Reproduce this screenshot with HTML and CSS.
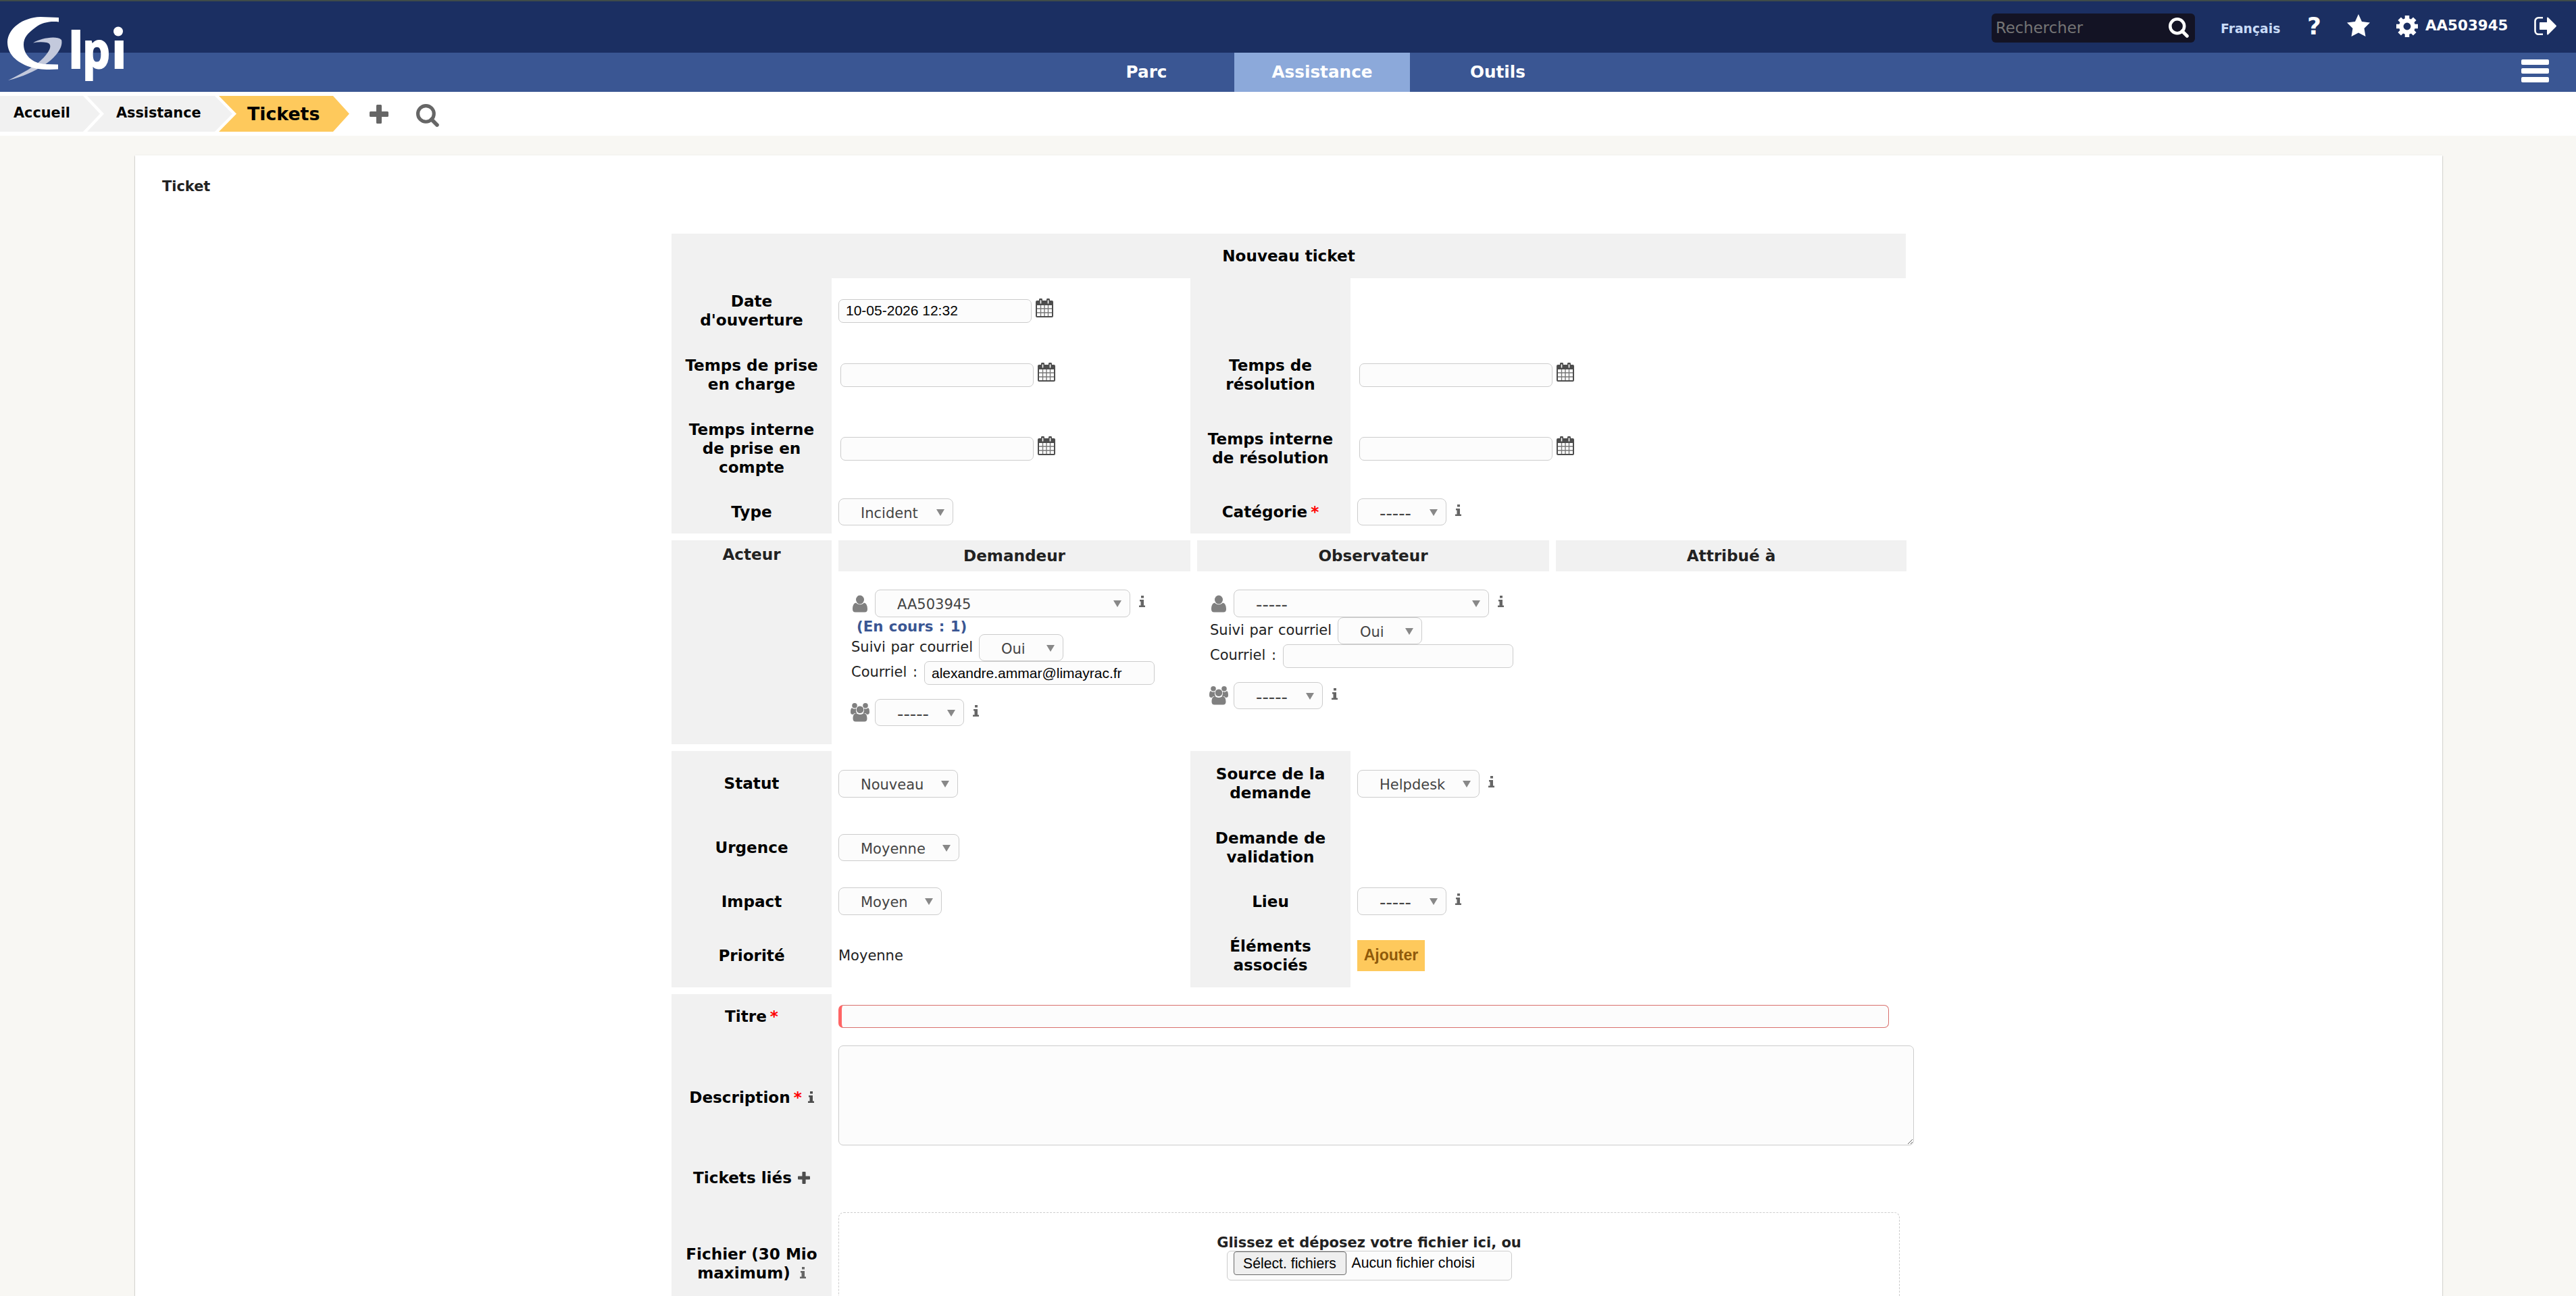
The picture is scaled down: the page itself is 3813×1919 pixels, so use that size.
FILE: index.html
```html
<!DOCTYPE html>
<html lang="fr">
<head>
    <meta charset="UTF-8">
    <meta name="viewport" content="width=device-width, initial-scale=1.0">
    <title>GLPI - Tickets</title>
    <link rel="stylesheet" href="styles.css">
</head>
<body>
    <!-- shared icons -->
    <svg class="sprite" width="0" height="0">
        <symbol id="calendar" viewBox="0 0 26 28">
            <path fill="#4d4d4d" fill-rule="evenodd" d="M2 3h3V2a2.500 2.500 0 0 1 5 0v1h6V2a2.500 2.500 0 0 1 5 0v1h3a2 2 0 0 1 2 2v21a2 2 0 0 1-2 2H2a2 2 0 0 1-2-2V5a2 2 0 0 1 2-2zM2 10v16h22V10z"/>
            <path fill="#fff" d="M6.700 2.500h1.600v5H6.700zM17.700 2.500h1.600v5h-1.600z"/>
            <path stroke="#777" stroke-width="1.400" d="M2 15h22M2 21h22M7.500 10v16M13 10v16M18.500 10v16"/>
        </symbol>
        <symbol id="info" viewBox="0 0 9 17">
            <path d="M3 0h4v3.500H3zM1 6h6v8.500h2V17H0v-2.500h2.500v-6H1z"/>
        </symbol>
        <symbol id="user" viewBox="0 0 28 28">
            <ellipse cx="14" cy="8" rx="6" ry="6.500"/>
            <path d="M8 12.500c3.500 3.500 8.500 3.500 12 0 3.500.8 5 4.500 5 9.500 0 3-1.500 4.500-4 4.500H7c-2.500 0-4-1.500-4-4.500 0-5 1.500-8.700 5-9.500z"/>
        </symbol>
        <symbol id="users" viewBox="0 0 28 28">
            <circle cx="6" cy="3.800" r="3.800"/>
            <circle cx="22" cy="3.800" r="3.800"/>
            <path d="M2 7c2 2 4 2 6 1 0 4 0 5 1.500 7H6c-1 .8-1.500 1.200-2 2-3 0-4-1-4-3.500C0 10 .5 8 2 7zM26 7c-2 2-4 2-6 1 0 4 0 5-1.500 7H22c1 .8 1.500 1.200 2 2 3 0 4-1 4-3.500C28 10 27.500 8 26 7z"/>
            <circle cx="14" cy="9.800" r="5.300"/>
            <path d="M8.500 15c3 2.500 8 2.500 11 0 3.500.5 5 3.500 5 8 0 3-1.500 4.500-4 4.500h-13C5 27.500 3.500 26 3.500 23c0-4.500 1.500-7.500 5-8z"/>
        </symbol>
        <symbol id="search" viewBox="0 0 33 33">
            <circle cx="14" cy="14" r="11.500" fill="none" stroke="currentColor" stroke-width="5"/>
            <path d="M22 22l8 8" stroke="currentColor" stroke-width="5.500" stroke-linecap="round"/>
        </symbol>
        <symbol id="plus" viewBox="0 0 28 28">
            <path d="M11.500 0h5a1.500 1.500 0 0 1 1.500 1.500V10h8.500a1.500 1.500 0 0 1 1.500 1.500v5a1.500 1.500 0 0 1-1.500 1.500H18v8.500a1.500 1.500 0 0 1-1.500 1.500h-5a1.500 1.500 0 0 1-1.500-1.500V18H1.500A1.500 1.500 0 0 1 0 16.500v-5A1.500 1.500 0 0 1 1.500 10H10V1.500A1.500 1.500 0 0 1 11.500 0z"/>
        </symbol>
    </svg>

    <header>
        <svg class="logo" width="200" height="136" viewBox="0 0 200 136">
            <path fill="#c3c9dc" d="M49 63.500C60 57 83 52 91 59c3 12-10 27-25 37-14 9-33 18-54 23 20-10 41-21 53-34 10-11 13-20 4-22-6-1-13-1-20 .5z"/>
            <path fill="#fff" d="M87 26v6.500C75 31 62 33 52 41c-11 8-17 15-17 25 0 14 11 28 33 29l18 .5v7c-16 1-31 .5-42-3.500C24 92 11 80 11 62 12 42 33 26 60 25z"/>
            <g class="logo-text">
                <text x="101" y="101">l</text>
                <text x="122" y="101" textLength="41" lengthAdjust="spacingAndGlyphs">p</text>
                <text x="165" y="101">ı</text>
            </g>
            <circle cx="175" cy="46.500" r="7" fill="#fff"/>
        </svg>
        <div class="top-bar">
            <div class="search-box">
                <span>Rechercher</span>
                <svg width="30" height="30"><use href="#search"/></svg>
            </div>
            <a class="lang">Français</a>
            <a class="help">?</a>
            <svg class="star" width="34" height="33" viewBox="0 0 34 33"><path fill="#fff" d="M17 0l5 11 12 1.500-8.500 8.500 2 12L17 27.500 6.500 33l2-12L0 12.500 12 11z"/></svg>
            <svg class="gear" width="32" height="32" viewBox="0 0 32 32">
                <circle cx="16" cy="16" r="8.700" fill="none" stroke="#fff" stroke-width="6.500"/>
                <path stroke="#fff" stroke-width="6.500" d="M16 0v6M16 26v6M0 16h6M26 16h6M4.700 4.700l4.200 4.200M23.100 23.100l4.200 4.200M4.700 27.300l4.200-4.200M23.100 8.900l4.200-4.200"/>
            </svg>
            <a class="login">AA503945</a>
            <svg class="logout" width="33" height="27" viewBox="0 0 33 27">
                <path fill="none" stroke="#fff" stroke-width="2.600" d="M13 1.300H6.500a5 5 0 0 0-5 5v14.400a5 5 0 0 0 5 5H13"/>
                <path fill="#fff" d="M9 8h10V2c0-1.500 1-2 2-1l11.500 11.500c.6.600.6 1.400 0 2L21 26c-1 1-2 .5-2-1v-6H9c-.8 0-1-.5-1-1V9c0-.6.300-1 1-1z"/>
            </svg>
        </div>
        <nav>
            <a>Parc</a>
            <a class="active">Assistance</a>
            <a>Outils</a>
            <div class="burger"><span></span><span></span><span></span></div>
        </nav>
    </header>

    <div class="breadcrumb">
        <a class="crumb first">Accueil</a>
        <a class="crumb second">Assistance</a>
        <a class="crumb current">Tickets</a>
        <svg class="add" width="28" height="28"><use href="#plus"/></svg>
        <svg class="find" width="34" height="34"><use href="#search"/></svg>
    </div>

    <main>
        <h2>Ticket</h2>
        <form class="ticket-form">
            <div class="title">Nouveau ticket</div>

            <section class="fields dates">
                <label>Date<br>d'ouverture</label>
                <div class="cell">
                    <input class="date" type="text" value="10-05-2026 12:32">
                    <svg class="cal" width="26" height="28"><use href="#calendar"/></svg>
                </div>
                <label></label>
                <div class="cell"></div>

                <label>Temps de prise<br>en charge</label>
                <div class="cell indent">
                    <input class="date" type="text">
                    <svg class="cal" width="26" height="28"><use href="#calendar"/></svg>
                </div>
                <label>Temps de<br>résolution</label>
                <div class="cell indent">
                    <input class="date" type="text">
                    <svg class="cal" width="26" height="28"><use href="#calendar"/></svg>
                </div>

                <label>Temps interne<br>de prise en<br>compte</label>
                <div class="cell indent">
                    <input class="date" type="text">
                    <svg class="cal" width="26" height="28"><use href="#calendar"/></svg>
                </div>
                <label>Temps interne<br>de résolution</label>
                <div class="cell indent">
                    <input class="date" type="text">
                    <svg class="cal" width="26" height="28"><use href="#calendar"/></svg>
                </div>

                <label>Type</label>
                <div class="cell"><div class="select w-incident">Incident</div></div>
                <label><span>Catégorie<span class="red">*</span></span></label>
                <div class="cell">
                    <div class="select empty">-----</div>
                    <svg class="info" width="9" height="17"><use href="#info"/></svg>
                </div>
            </section>

            <section class="actors">
                <div class="actor-label">Acteur</div>
                <div class="actor">
                    <h3>Demandeur</h3>
                    <div class="line">
                        <svg class="who" width="28" height="28"><use href="#user"/></svg>
                        <div class="select wide">AA503945</div>
                        <svg class="info" width="9" height="17"><use href="#info"/></svg>
                    </div>
                    <a class="ongoing">(En cours : 1)</a>
                    <div class="line">
                        <span class="text follow">Suivi par courriel</span>
                        <div class="select yes">Oui</div>
                    </div>
                    <div class="line">
                        <span class="text mail">Courriel :</span>
                        <input class="email" type="text" value="alexandre.ammar@limayrac.fr">
                    </div>
                    <div class="line group">
                        <svg class="who" width="28" height="28"><use href="#users"/></svg>
                        <div class="select empty">-----</div>
                        <svg class="info" width="9" height="17"><use href="#info"/></svg>
                    </div>
                </div>
                <div class="actor">
                    <h3>Observateur</h3>
                    <div class="line">
                        <svg class="who" width="28" height="28"><use href="#user"/></svg>
                        <div class="select empty wide">-----</div>
                        <svg class="info" width="9" height="17"><use href="#info"/></svg>
                    </div>
                    <div class="line">
                        <span class="text follow">Suivi par courriel</span>
                        <div class="select yes">Oui</div>
                    </div>
                    <div class="line">
                        <span class="text mail">Courriel :</span>
                        <input class="email" type="text">
                    </div>
                    <div class="line group">
                        <svg class="who" width="28" height="28"><use href="#users"/></svg>
                        <div class="select empty">-----</div>
                        <svg class="info" width="9" height="17"><use href="#info"/></svg>
                    </div>
                </div>
                <div class="actor">
                    <h3>Attribué à</h3>
                </div>
            </section>

            <section class="fields status">
                <label>Statut</label>
                <div class="cell"><div class="select tall w-nouveau">Nouveau</div></div>
                <label>Source de la<br>demande</label>
                <div class="cell">
                    <div class="select tall w-helpdesk">Helpdesk</div>
                    <svg class="info" width="9" height="17"><use href="#info"/></svg>
                </div>

                <label>Urgence</label>
                <div class="cell"><div class="select w-moyenne">Moyenne</div></div>
                <label>Demande de<br>validation</label>
                <div class="cell"></div>

                <label>Impact</label>
                <div class="cell"><div class="select tall w-moyen">Moyen</div></div>
                <label>Lieu</label>
                <div class="cell">
                    <div class="select tall empty">-----</div>
                    <svg class="info" width="9" height="17"><use href="#info"/></svg>
                </div>

                <label>Priorité</label>
                <div class="cell">Moyenne</div>
                <label>Éléments<br>associés</label>
                <div class="cell"><button type="button" class="submit">Ajouter</button></div>
            </section>

            <section class="fields content">
                <label><span>Titre<span class="red">*</span></span></label>
                <div class="cell"><input class="subject" type="text"></div>

                <label><span>Description<span class="red">*</span><svg class="mini" width="9" height="17"><use href="#info"/></svg></span></label>
                <div class="cell"><textarea></textarea></div>

                <label class="linked"><span>Tickets liés<svg class="mini" width="18" height="18"><use href="#plus"/></svg></span></label>
                <div class="cell"></div>

                <label><span>Fichier (30 Mio<br>maximum)<svg class="mini far" width="9" height="17"><use href="#info"/></svg></span></label>
                <div class="cell">
                    <div class="dropzone">
                        <b>Glissez et déposez votre fichier ici, ou</b>
                        <div class="file">
                            <span class="file-button">Sélect. fichiers</span>
                            <span>Aucun fichier choisi</span>
                        </div>
                    </div>
                </div>
            </section>
        </form>
    </main>
</body>
</html>
```
FILE: styles.css
```css
* {
    box-sizing: border-box;
}

body {
    margin: 0;
    height: 1919px;
    overflow: hidden;
    background: #f8f7f3;
    font-family: Verdana, "DejaVu Sans", sans-serif;
    font-size: 21px;
    color: #222;
}

svg {
    display: block;
    flex: none;
}

.sprite {
    position: absolute;
}

/* Header */
header {
    position: relative;
    border-top: 2px solid #3f4c49;
    color: #fff;
    font-weight: bold;
}

.logo {
    position: absolute;
    left: 0;
    top: -2px;
}

.logo-text {
    fill: #fff;
    stroke: #fff;
    stroke-width: 2px;
    font-family: "Open Sans", sans-serif;
    font-size: 74px;
    font-weight: bold;
}

.top-bar {
    display: flex;
    justify-content: flex-end;
    align-items: center;
    height: 76px;
    padding: 0 29px 3px 0;
    background: #1b2f62;
}

.search-box {
    display: flex;
    justify-content: space-between;
    align-items: center;
    width: 301px;
    height: 43px;
    margin: 5px 38px 0 0;
    padding: 0 9px 0 6px;
    border-radius: 6px;
    background: #131324;
    font-size: 22.8px;
    font-weight: normal;
}

.search-box span {
    color: #757575;
}

.lang {
    width: 89px;
    margin: 7px 39px 0 0;
    font-size: 18.8px;
    color: #c9dcf8;
}

.help {
    width: 21px;
    margin-right: 38px;
    font-size: 36px;
    line-height: 36px;
}

.star {
    margin: 0 39px 2px 0;
}

.gear {
    margin-right: 11px;
}

.login {
    width: 122px;
    margin: 0 39px 2px 0;
    font-size: 21.4px;
}

nav {
    display: flex;
    align-items: center;
    height: 58px;
    padding: 0 40px 0 1567px;
    background: #3a5693;
}

nav a {
    width: 260px;
    font-size: 24.7px;
    line-height: 58px;
    text-align: center;
}

nav .active {
    background: #8ca9da;
}

.burger {
    display: flex;
    flex-direction: column;
    gap: 5px;
    margin: 0 0 4px auto;
}

.burger span {
    width: 41px;
    height: 8px;
    border-radius: 2px;
    background: #fff;
}

/* Breadcrumb */
.breadcrumb {
    display: flex;
    align-items: center;
    height: 65px;
    background: #fff;
    color: #666;
}

.crumb {
    height: 53px;
    background: #f1f1f1;
    color: #000;
    font-size: 20.8px;
    font-weight: bold;
    line-height: 50px;
}

.first {
    width: 148px;
    padding-left: 20px;
    clip-path: polygon(0 0, 123px 0, 148px 50%, 123px 100%, 0 100%);
}

.second {
    width: 215px;
    margin-left: -19px;
    padding-left: 43px;
    clip-path: polygon(0 0, 189px 0, 215px 50%, 189px 100%, 0 100%, 25px 50%);
}

.current {
    width: 193px;
    margin-left: -20px;
    padding-left: 42px;
    background: #fec95c;
    font-size: 26.8px;
    line-height: 54px;
    clip-path: polygon(0 0, 169px 0, 193px 50%, 169px 100%, 0 100%, 26px 50%);
}

.add {
    margin-left: 30px;
    fill: #666;
}

.find {
    margin: 5px 0 0 41px;
}

/* Page */
main {
    width: 3415px;
    height: 1689px;
    margin: 29px 0 0 200px;
    padding: 32px 40px 0;
    overflow: hidden;
    background: #fff;
    box-shadow: 0 1px 2px rgba(0, 0, 0, 0.4);
}

h2 {
    margin: 0;
    font-size: 20.9px;
    line-height: 28px;
}

.ticket-form {
    width: 1827px;
    margin: 56px 0 0 754px;
}

.title {
    height: 66px;
    background: #f1f1f1;
    color: #000;
    font-size: 23.1px;
    font-weight: bold;
    line-height: 67px;
    text-align: center;
}

.fields {
    display: grid;
    grid-template-columns: 237px 531px 237px 822px;
    margin-bottom: 10px;
}

.dates {
    grid-template-rows: 96px 94px 124px 64px;
}

.status {
    grid-template-rows: 96px 94px 65px 95px;
}

.content {
    grid-template-columns: 237px 1590px;
    grid-template-rows: 66px 174px 63px 192px;
}

.fields label {
    display: flex;
    justify-content: center;
    align-items: center;
    background: #f1f1f1;
    color: #000;
    font-size: 23.1px;
    font-weight: bold;
    line-height: 28px;
    text-align: center;
}

.cell {
    display: flex;
    align-items: center;
    padding-left: 10px;
}

.indent {
    padding-left: 13px;
}

.red {
    margin-left: 5px;
    color: #f00;
    font-weight: bold;
}

input, textarea {
    border: 1px solid #ccc;
    border-radius: 7px;
    background: #fcfcfc;
    color: #000;
    font-family: "Liberation Sans", Arial, sans-serif;
    font-size: 21px;
}

.date {
    width: 286px;
    height: 35px;
    padding: 0 10px;
}

.cal {
    margin: 0 0 9px 6px;
}

.select {
    position: relative;
    height: 40px;
    padding: 2px 0 0 32px;
    border: 1px solid #ccc;
    border-radius: 8px;
    background: #fcfcfc;
    color: #444;
    font-size: 21px;
    line-height: 38px;
}

.select::after {
    content: "";
    position: absolute;
    right: 12px;
    top: 15px;
    border: solid transparent;
    border-width: 10px 6px 0;
    border-top-color: #888;
}

.tall {
    height: 41px;
}

.empty {
    width: 132px;
    font-size: 26px;
}

.w-incident {
    width: 170px;
}

.w-nouveau {
    width: 177px;
}

.w-moyenne {
    width: 179px;
}

.w-moyen {
    width: 153px;
}

.w-helpdesk {
    width: 181px;
}

.yes {
    width: 125px;
}

.wide {
    width: 378px;
    height: 41px;
}

.info {
    margin: 0 0 6px 13px;
    fill: #666;
}

.mini {
    display: inline-block;
    margin-left: 9px;
    fill: #4d4d4d;
}

.far {
    margin-left: 14px;
    fill: #666;
}

.linked .mini {
    margin-bottom: -1px;
}

/* Actors */
.actors {
    display: grid;
    grid-template-columns: 237px 521px 521px 519px;
    column-gap: 10px;
    height: 302px;
    margin-bottom: 10px;
}

.actor-label {
    background: #f1f1f1;
    font-size: 23.1px;
    font-weight: bold;
    line-height: 42px;
    text-align: center;
}

.actor h3 {
    height: 46px;
    margin: 0 0 27px;
    background: #f1f1f1;
    font-size: 23.1px;
    line-height: 46px;
    text-align: center;
}

.line {
    display: flex;
    align-items: center;
    padding-left: 18px;
}

.who {
    margin-right: 8px;
    fill: #808080;
}

.text {
    margin: -3px 0 0 1px;
}

.follow {
    width: 189px;
    white-space: nowrap;
    word-spacing: 1px;
}

.mail {
    width: 108px;
    word-spacing: 2px;
}

.email {
    width: 341px;
    height: 35px;
    padding: 0 10px;
}

.group {
    margin-top: 21px;
}

.ongoing {
    display: block;
    height: 25px;
    padding-left: 27px;
    color: #3a5693;
    font-size: 21.3px;
    font-weight: bold;
    line-height: 28px;
    word-spacing: 1px;
}

.submit {
    width: 100px;
    height: 46px;
    padding: 0;
    border: 0;
    background: #fec95c;
    color: #8f5a0a;
    font-family: "Liberation Sans", Arial, sans-serif;
    font-size: 23px;
    font-weight: bold;
}

/* Title, description, files */
.subject {
    width: 1555px;
    height: 34px;
    border-color: #d9706c;
    border-left: 5px solid #ff6565;
}

textarea {
    flex: none;
    width: 1592px;
    height: 148px;
    margin-bottom: 6px;
}

.dropzone {
    width: 1571px;
    height: 172px;
    margin-top: 20px;
    padding-top: 32px;
    border: 1px dashed #ccc;
    border-radius: 8px;
    text-align: center;
}

.dropzone b {
    display: block;
    font-size: 21px;
    line-height: 24px;
}

.file {
    display: flex;
    align-items: flex-start;
    gap: 8px;
    width: 422px;
    height: 44px;
    margin: 0 auto;
    padding-left: 9px;
    border: 1px solid #ccc;
    border-radius: 6px;
    background: #fcfcfc;
    color: #000;
    font-family: "Liberation Sans", Arial, sans-serif;
    font-size: 21.2px;
    line-height: 33px;
}

.file-button {
    width: 167px;
    height: 35px;
    border: 1px solid #6b6b6b;
    border-radius: 4px;
    background: #efefef;
}
```
